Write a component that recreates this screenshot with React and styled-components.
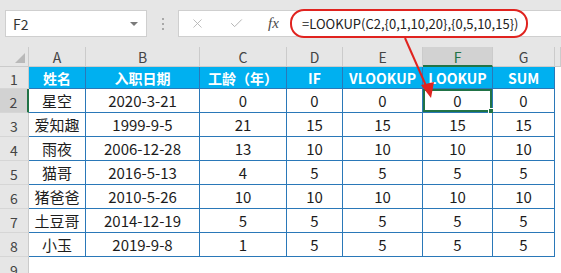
import React from 'react';
import styled, { createGlobalStyle, css } from 'styled-components';
import { X, Check } from 'lucide-react';

const GlobalStyle = createGlobalStyle`
  html, body {
    margin: 0;
    padding: 0;
    background: #ffffff;
  }
  body {
    font-family: "Noto Sans CJK SC", "Noto Sans", sans-serif;
    width: 561px;
    height: 273px;
    overflow: hidden;
  }
`;

const columns = ['A', 'B', 'C', 'D', 'E', 'F', 'G'];
const headers = ['姓名', '入职日期', '工龄（年）', 'IF', 'VLOOKUP', 'LOOKUP', 'SUM'];
const rows = [
  ['星空', '2020-3-21', 0, 0, 0, 0, 0],
  ['爱知趣', '1999-9-5', 21, 15, 15, 15, 15],
  ['雨夜', '2006-12-28', 13, 10, 10, 10, 10],
  ['猫哥', '2016-5-13', 4, 5, 5, 5, 5],
  ['猪爸爸', '2010-5-26', 10, 10, 10, 10, 10],
  ['土豆哥', '2014-12-19', 5, 5, 5, 5, 5],
  ['小玉', '2019-9-8', 1, 5, 5, 5, 5],
];

const GRID_BLUE = '#2a78b8';
const EXCEL_GREEN = '#217346';

const App = () => {
  return (
    <Page>
      <GlobalStyle />
      <Toolbar>
        <NameBox>
          <span>F2</span>
          <Caret />
        </NameBox>
        <Grip>
          <i />
          <i />
          <i />
        </Grip>
        <FormulaBox>
          <ToolIcon>
            <X size={15} strokeWidth={1.4} />
          </ToolIcon>
          <ToolIcon>
            <Check size={15} strokeWidth={1.6} />
          </ToolIcon>
          <Fx>fx</Fx>
          <Highlight>=LOOKUP(C2,{'{'}0,1,10,20{'}'},{'{'}0,5,10,15{'}'})</Highlight>
        </FormulaBox>
      </Toolbar>

      <Sheet>
        <Corner />
        {columns.map((c) => (
          <ColHead key={c} selected={c === 'F'}>
            {c}
          </ColHead>
        ))}
        <ColHead $blank />

        <RowHead>1</RowHead>
        {headers.map((h) => (
          <HeadCell key={h}>{h}</HeadCell>
        ))}
        <Cell />

        {rows.map((r, ri) => (
          <React.Fragment key={ri}>
            <RowHead selected={ri === 0}>{ri + 2}</RowHead>
            {r.map((v, ci) => (
              <DataCell key={ci} active={ri === 0 && ci === 5}>
                {v}
                {ri === 0 && ci === 5 && <Handle />}
              </DataCell>
            ))}
            <Cell />
          </React.Fragment>
        ))}

        <RowHead>9</RowHead>
        {columns.map((c) => (
          <Cell key={c} />
        ))}
        <Cell />
      </Sheet>

      <Arrow width="561" height="273" viewBox="0 0 561 273">
        <line x1="405" y1="38" x2="427" y2="88" stroke="#e0231f" strokeWidth="2" />
        <polygon points="431,98 421,85 434,82" fill="#e0231f" />
      </Arrow>
    </Page>
  );
};

const Page = styled.div`
  position: relative;
  width: 561px;
  height: 273px;
  overflow: hidden;
  background: #ffffff;
`;

const Toolbar = styled.div`
  height: 47px;
  background: #e6e6e6;
  display: flex;
  align-items: center;
  padding-left: 5px;
  box-sizing: border-box;
`;

const NameBox = styled.div`
  width: 142px;
  height: 27px;
  box-sizing: border-box;
  background: #ffffff;
  border: 1px solid #cfcfcf;
  display: flex;
  align-items: center;
  justify-content: space-between;
  padding: 0 8px 0 7px;
  font-size: 14px;
  color: #333;
`;

const Caret = styled.span`
  width: 0;
  height: 0;
  border-left: 4px solid transparent;
  border-right: 4px solid transparent;
  border-top: 4px solid #7a7a7a;
`;

const Grip = styled.div`
  width: 31px;
  display: flex;
  flex-direction: column;
  align-items: center;
  gap: 3px;
  i {
    width: 2px;
    height: 2px;
    background: #a8a8a8;
  }
`;

const FormulaBox = styled.div`
  flex: 1;
  height: 27px;
  box-sizing: border-box;
  background: #ffffff;
  border: 1px solid #cfcfcf;
  border-right: none;
  display: flex;
  align-items: center;
  padding-left: 11px;
`;

const ToolIcon = styled.span`
  width: 39px;
  display: flex;
  color: #b4b4b4;
`;

const Fx = styled.span`
  font-family: "Liberation Serif", serif;
  font-style: italic;
  font-size: 15px;
  color: #4a4a4a;
  width: 22px;
`;

const Highlight = styled.span`
  height: 29px;
  box-sizing: border-box;
  border: 2px solid #e0231f;
  border-radius: 14px;
  display: flex;
  align-items: center;
  padding: 0 8px 0 10px;
  font-size: 13px;
  color: #222;
  white-space: nowrap;
`;

const Sheet = styled.div`
  display: grid;
  grid-template-columns: 29px 57px 114px 87px 56px 80px 70px 62px 6px;
  grid-template-rows: 20px 22px repeat(7, 24px) 24px;
`;

const centered = css`
  display: flex;
  align-items: center;
  justify-content: center;
  box-sizing: border-box;
  position: relative;
`;

const Corner = styled.div`
  ${centered};
  background: #e6e6e6;
  border-right: 1px solid #cbcbcb;
  border-bottom: 1px solid #cbcbcb;
  &::after {
    content: '';
    position: absolute;
    right: 3px;
    bottom: 3px;
    border-left: 10px solid transparent;
    border-bottom: 10px solid #b9b9b9;
  }
`;

const ColHead = styled.div`
  ${centered};
  background: ${(p) => (p.selected ? '#d2d2d2' : '#e6e6e6')};
  color: ${(p) => (p.selected ? EXCEL_GREEN : '#444')};
  border-right: 1px solid #cbcbcb;
  border-bottom: ${(p) => (p.selected ? `2px solid ${EXCEL_GREEN}` : '1px solid #cbcbcb')};
  font-size: 14px;
  padding-top: 1px;
`;

const RowHead = styled.div`
  ${centered};
  background: ${(p) => (p.selected ? '#d2d2d2' : '#e6e6e6')};
  color: #444;
  border-right: ${(p) => (p.selected ? `2px solid ${EXCEL_GREEN}` : '1px solid #cbcbcb')};
  border-bottom: 1px solid #d6d6d6;
  font-size: 14px;
  padding-top: 3px;
`;

const Cell = styled.div`
  box-sizing: border-box;
  background: #ffffff;
`;

const HeadCell = styled.div`
  ${centered};
  background: #00b0f0;
  color: #ffffff;
  font-size: 14px;
  font-weight: 700;
  border-right: 1px solid ${GRID_BLUE};
  border-bottom: 1px solid ${GRID_BLUE};
  white-space: nowrap;
`;

const DataCell = styled.div`
  ${centered};
  background: #ffffff;
  color: #1c1c1c;
  font-size: 15px;
  border-right: 1px solid ${GRID_BLUE};
  border-bottom: 1px solid ${GRID_BLUE};
  white-space: nowrap;
  ${(p) =>
    p.active &&
    css`
      box-shadow: inset 0 0 0 2px ${EXCEL_GREEN};
    `}
`;

const Handle = styled.span`
  position: absolute;
  right: -3px;
  bottom: -3px;
  width: 5px;
  height: 5px;
  background: ${EXCEL_GREEN};
  border: 1px solid #ffffff;
`;

const Arrow = styled.svg`
  position: absolute;
  left: 0;
  top: 0;
  pointer-events: none;
`;

export default App;
